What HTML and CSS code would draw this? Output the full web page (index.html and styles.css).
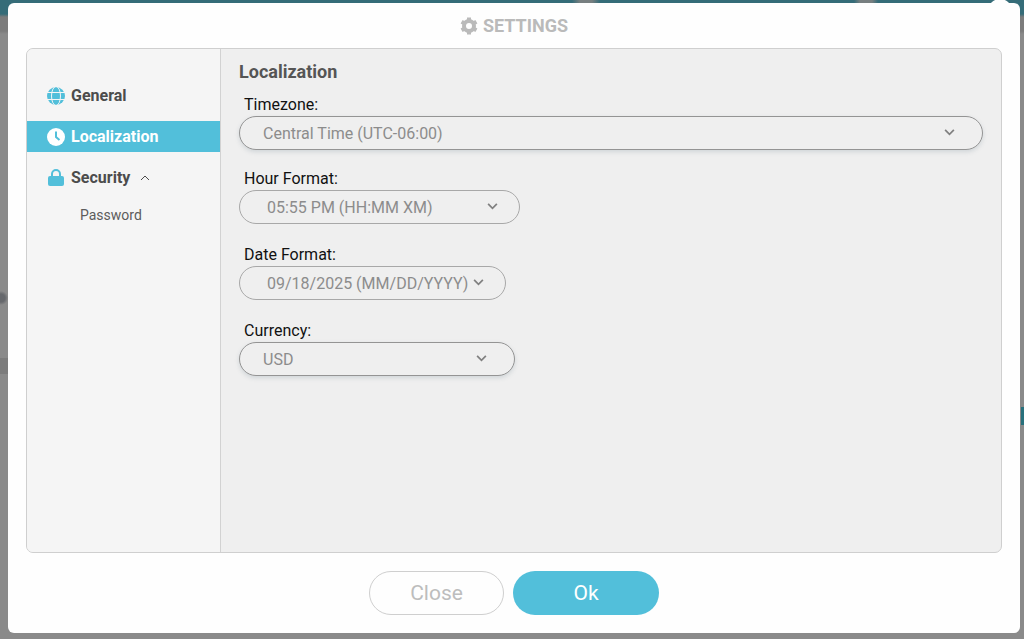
FILE: index.html
```html
<!DOCTYPE html>
<html lang="en">
<head>
    <meta charset="UTF-8">
    <meta name="viewport" content="width=device-width, initial-scale=1.0">
    <title>Settings</title>
    <link rel="stylesheet" href="styles.css">
</head>
<body>
    <div class="modal" role="dialog" aria-labelledby="settingsTitle">
        <span class="modal-knob"></span>

        <h1 class="modal-title" id="settingsTitle">
            <svg class="title-icon" viewBox="0 0 18 18" aria-hidden="true">
                <circle cx="9" cy="9" r="5"/>
                <path d="M9 .5v4M9 13.500v4M1.600 4.750l3.500 2M12.900 11.250l3.500 2M1.600 13.250l3.500-2M12.900 6.750l3.500-2"/>
            </svg>
            SETTINGS
        </h1>

        <div class="panel">
            <nav class="sidebar">
                <a class="menu-item" href="#general">
                    <svg class="menu-icon" viewBox="0 0 18 18" aria-hidden="true">
                        <circle cx="9" cy="9" r="9" fill="currentColor"/>
                        <g class="globe-lines">
                            <ellipse cx="9" cy="9" rx="4.500" ry="9.500"/>
                            <path d="M0 5.500h18M0 12.500h18"/>
                        </g>
                    </svg>
                    General
                </a>
                <a class="menu-item active" href="#localization">
                    <svg class="menu-icon" viewBox="0 0 18 18" aria-hidden="true">
                        <circle cx="9" cy="9" r="9" fill="currentColor"/>
                        <path class="clock-hands" d="M9 3.500V9l3.500 3"/>
                    </svg>
                    Localization
                </a>
                <a class="menu-item" href="#security">
                    <svg class="menu-icon" viewBox="0 0 18 18" aria-hidden="true">
                        <path d="M5 9V5a4 4 0 0 1 8 0v4" fill="none" stroke="currentColor" stroke-width="2"/>
                        <rect x="1" y="7" width="16" height="10" rx="2" fill="currentColor"/>
                    </svg>
                    Security
                    <svg class="caret" viewBox="0 0 10 6" aria-hidden="true"><path d="M1 5l4-4 4 4"/></svg>
                </a>
                <a class="submenu-item" href="#password">Password</a>
            </nav>

            <form class="content" id="settingsForm">
                <h2>Localization</h2>

                <div class="field field-wide">
                    <label for="timezone">Timezone:</label>
                    <div class="select-box raised">
                        <select id="timezone">
                            <option>Central Time (UTC-06:00)</option>
                        </select>
                        <svg class="arrow" viewBox="0 0 12 8" aria-hidden="true"><path d="M1 1l5 5 5-5"/></svg>
                    </div>
                </div>

                <div class="field">
                    <label for="hourFormat">Hour Format:</label>
                    <div class="select-box hour">
                        <select id="hourFormat">
                            <option>05:55 PM (HH:MM XM)</option>
                        </select>
                        <svg class="arrow" viewBox="0 0 12 8" aria-hidden="true"><path d="M1 1l5 5 5-5"/></svg>
                    </div>
                </div>

                <div class="field">
                    <label for="dateFormat">Date Format:</label>
                    <div class="select-box date">
                        <select id="dateFormat">
                            <option>09/18/2025 (MM/DD/YYYY)</option>
                        </select>
                        <svg class="arrow" viewBox="0 0 12 8" aria-hidden="true"><path d="M1 1l5 5 5-5"/></svg>
                    </div>
                </div>

                <div class="field">
                    <label for="currency">Currency:</label>
                    <div class="select-box raised currency">
                        <select id="currency">
                            <option>USD</option>
                        </select>
                        <svg class="arrow" viewBox="0 0 12 8" aria-hidden="true"><path d="M1 1l5 5 5-5"/></svg>
                    </div>
                </div>
            </form>
        </div>

        <div class="buttons">
            <button type="button" class="btn btn-close">Close</button>
            <button type="submit" form="settingsForm" class="btn btn-ok">Ok</button>
        </div>
    </div>
</body>
</html>
```

FILE: styles.css
```css
* {
    box-sizing: border-box;
}

body {
    margin: 0;
    padding: 3px 4px 6px 8px;
    min-height: 100vh;
    display: flex;
    overflow: hidden;
    font-family: Roboto, Arial, sans-serif;
    /* dimmed page behind the dialog */
    background:
        linear-gradient(#27707c, #27707c) right 407px / 3px 18px no-repeat,
        linear-gradient(#7c7c7c, #7c7c7c) left 358px / 8px 16px no-repeat,
        radial-gradient(circle, #66686c 4px, transparent 7px) -6px 291px / 14px 14px no-repeat,
        linear-gradient(90deg, transparent 572px, #777f80 580px, #777f80 592px, transparent 600px) left top / 100% 3px no-repeat,
        linear-gradient(90deg, transparent 854px, #777f80 860px, #777f80 872px, transparent 878px) left top / 100% 3px no-repeat,
        linear-gradient(#356c78 14px, #7c7c7c 17px, #7c7c7c 31px, #8a8a8a 34px);
}

.modal {
    position: relative;
    flex: 1;
    display: flex;
    flex-direction: column;
    padding: 0 18px 18px;
    border-radius: 6px;
    background-color: #fefefe;
}

/* round corner knob sticking out of the top edge */
.modal-knob {
    position: absolute;
    top: -4px;
    right: 8px;
    width: 24px;
    height: 24px;
    border-radius: 50%;
    background-color: #fefefe;
}

.modal-title {
    display: flex;
    align-items: center;
    justify-content: center;
    gap: 5px;
    height: 45px;
    margin: 0;
    font-size: 18px;
    font-weight: 700;
    color: #bababa;
}

.title-icon {
    width: 18px;
    height: 18px;
    fill: none;
    stroke: currentColor;
    stroke-width: 4;
}

.panel {
    flex: 1;
    display: flex;
    border: 1px solid #cfcfcf;
    border-radius: 7px;
    background-color: #efefef;
    overflow: hidden;
}

.sidebar {
    flex: 0 0 194px;
    display: flex;
    flex-direction: column;
    gap: 10px;
    padding-top: 31px;
    border-right: 1px solid #d2d2d2;
    background-color: #f5f5f5;
}

.menu-item {
    display: flex;
    align-items: center;
    height: 31px;
    padding-left: 20px;
    font-size: 16px;
    font-weight: 700;
    color: #4c4c4c;
    text-decoration: none;
}

.menu-icon {
    width: 18px;
    height: 18px;
    margin-right: 6px;
    color: #52bfda;
}

.globe-lines {
    fill: none;
    stroke: #f5f5f5;
    stroke-width: 1;
}

.clock-hands {
    fill: none;
    stroke: #52bfda;
    stroke-width: 2;
}

.active {
    background-color: #52bfda;
    color: #fff;
}

.active .menu-icon {
    color: #fff;
}

.caret {
    width: 10px;
    height: 6px;
    margin-left: 10px;
    fill: none;
    stroke: #4c4c4c;
    stroke-width: 1;
}

.submenu-item {
    padding: 4px 0 0 53px;
    font-size: 14px;
    color: #5c5c5c;
    text-decoration: none;
}

.content {
    flex: 1;
    padding: 12px 18px;
}

.content h2 {
    margin: 0 0 11px;
    font-size: 18px;
    line-height: 22px;
    font-weight: 700;
    color: #555;
}

.field {
    margin-bottom: 20px;
}

.field-wide {
    margin-bottom: 18px;
}

.field label {
    display: block;
    padding-left: 5px;
    font-size: 16px;
    line-height: 22px;
    color: #111;
}

.select-box {
    position: relative;
    height: 34px;
}

.select-box select {
    appearance: none;
    display: block;
    width: 100%;
    height: 100%;
    padding: 0 23px;
    border: 1px solid #a8a8a8;
    border-radius: 17px;
    background-color: transparent;
    font-family: inherit;
    font-size: 16px;
    color: #8c8c8c;
}

.raised select {
    border-color: #949494;
    box-shadow: 0 2px 4px rgba(120, 140, 150, 0.25);
    background-color: #efefef;
}

.arrow {
    position: absolute;
    top: 13px;
    right: 28px;
    width: 11px;
    height: 7px;
    fill: none;
    stroke: #808080;
    stroke-width: 2;
    pointer-events: none;
}

.hour {
    width: 281px;
}

.date {
    width: 267px;
}

.currency {
    width: 276px;
}

.hour select,
.date select {
    padding: 0 27px;
}

.hour .arrow,
.date .arrow {
    right: 22px;
}

.buttons {
    display: flex;
    justify-content: center;
    gap: 9px;
    padding-top: 18px;
}

.btn {
    height: 44px;
    border-radius: 22px;
    font-family: inherit;
    font-size: 21px;
    cursor: pointer;
}

.btn-close {
    width: 135px;
    border: 1px solid #cfcfcf;
    background-color: #fefefe;
    color: #bdbdbd;
}

.btn-ok {
    width: 146px;
    border: none;
    background-color: #52bfda;
    color: #fff;
}
```
